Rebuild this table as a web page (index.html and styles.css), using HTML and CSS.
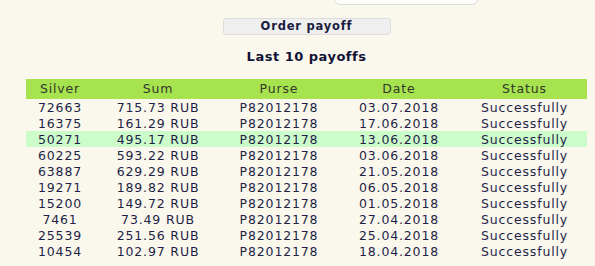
FILE: index.html
```html
<!DOCTYPE html>
<html lang="en">
<head>
<meta charset="utf-8">
<title>Payoffs</title>
<link rel="stylesheet" href="styles.css">
</head>
<body>
<div class="page">
  <div class="top-field"></div>
  <div class="actions">
    <button class="btn" type="button">Order payoff</button>
  </div>
  <h2 class="title">Last 10 payoffs</h2>
  <table class="payoffs">
    <colgroup>
      <col class="c-silver"><col class="c-sum"><col class="c-purse"><col class="c-date"><col class="c-status">
    </colgroup>
    <thead>
      <tr><th>Silver</th><th>Sum</th><th>Purse</th><th>Date</th><th>Status</th></tr>
    </thead>
    <tbody>
      <tr><td>72663</td><td>715.73 RUB</td><td>P82012178</td><td>03.07.2018</td><td>Successfully</td></tr>
      <tr><td>16375</td><td>161.29 RUB</td><td>P82012178</td><td>17.06.2018</td><td>Successfully</td></tr>
      <tr class="hl"><td>50271</td><td>495.17 RUB</td><td>P82012178</td><td>13.06.2018</td><td>Successfully</td></tr>
      <tr><td>60225</td><td>593.22 RUB</td><td>P82012178</td><td>03.06.2018</td><td>Successfully</td></tr>
      <tr><td>63887</td><td>629.29 RUB</td><td>P82012178</td><td>21.05.2018</td><td>Successfully</td></tr>
      <tr><td>19271</td><td>189.82 RUB</td><td>P82012178</td><td>06.05.2018</td><td>Successfully</td></tr>
      <tr><td>15200</td><td>149.72 RUB</td><td>P82012178</td><td>01.05.2018</td><td>Successfully</td></tr>
      <tr><td>7461</td><td>73.49 RUB</td><td>P82012178</td><td>27.04.2018</td><td>Successfully</td></tr>
      <tr><td>25539</td><td>251.56 RUB</td><td>P82012178</td><td>25.04.2018</td><td>Successfully</td></tr>
      <tr><td>10454</td><td>102.97 RUB</td><td>P82012178</td><td>18.04.2018</td><td>Successfully</td></tr>
    </tbody>
  </table>
</div>
</body>
</html>
```
FILE: styles.css
```css
html, body {
  margin: 0;
  padding: 0;
  background: #faf8ec;
}
body {
  font-family: "DejaVu Sans", Verdana, sans-serif;
  color: #1f1f48;
  overflow: hidden;
}
.page {
  padding: 0 8px 0 26px;
}
.top-field {
  width: 142px;
  height: 16px;
  margin: -13px 0 0 308px;
  background: #fdfdfb;
  border: 1px solid #dcdcd8;
  border-radius: 0 0 6px 6px;
}
.actions {
  display: flex;
  justify-content: center;
  margin-top: 13px;
}
.btn {
  width: 168px;
  height: 17px;
  padding: 0;
  background: #efefef;
  border: 1px solid #dddddd;
  border-radius: 3px;
  font-family: inherit;
  font-size: 11.5px;
  font-weight: bold;
  letter-spacing: 0.8px;
  color: #1a1b40;
  line-height: 15px;
}
.title {
  margin: 14px 0 0;
  font-size: 13px;
  line-height: 16px;
  font-weight: bold;
  letter-spacing: 0.5px;
  text-align: center;
  color: #121236;
}
.payoffs {
  width: 100%;
  margin-top: 14px;
  border-collapse: collapse;
  table-layout: fixed;
  font-size: 12.5px;
  letter-spacing: 0.85px;
}
.c-silver { width: 68px; }
.c-sum { width: 128px; }
.c-purse { width: 114px; }
.c-date { width: 126px; }
.c-status { width: 125px; }
.payoffs th {
  height: 20px;
  padding: 0;
  background: #a6e34f;
  font-weight: normal;
  line-height: 20px;
  color: #333829;
  text-align: center;
}
.payoffs td {
  height: 14px;
  padding: 2px 0 0;
  line-height: 14px;
  text-align: center;
  white-space: nowrap;
}
.payoffs tr.hl td {
  background: #cdfccb;
}
```
